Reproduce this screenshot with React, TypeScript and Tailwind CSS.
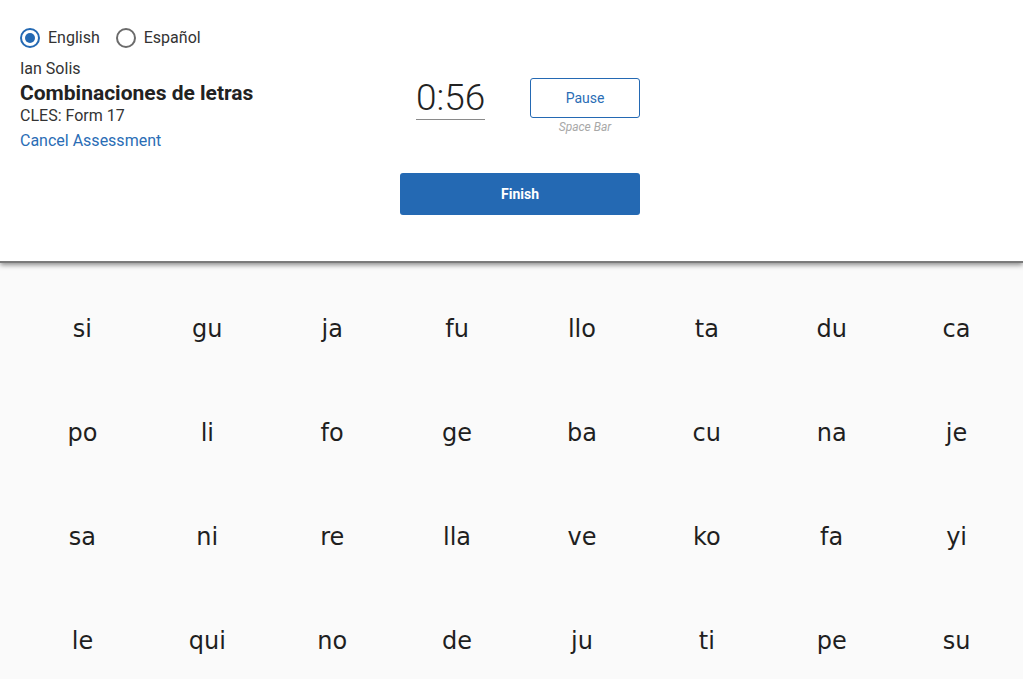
const syllables = [
  "si", "gu", "ja", "fu", "llo", "ta", "du", "ca",
  "po", "li", "fo", "ge", "ba", "cu", "na", "je",
  "sa", "ni", "re", "lla", "ve", "ko", "fa", "yi",
  "le", "qui", "no", "de", "ju", "ti", "pe", "su",
];

const Radio = ({ label, checked }: { label: string; checked: boolean }) => (
  <label className="flex items-center gap-[8px] mr-[16px]">
    <span
      className={
        checked
          ? "w-[20px] h-[20px] rounded-full border-2 border-[#2469b3] flex items-center justify-center"
          : "w-[20px] h-[20px] rounded-full border-2 border-[#6b6b6b]"
      }
    >
      {checked && <span className="w-[10px] h-[10px] rounded-full bg-[#2469b3]" />}
    </span>
    <span className="text-[16px] text-[#333]">{label}</span>
  </label>
);

const App = () => {
  return (
    <div
      className="w-[1023px] h-[679px] overflow-hidden bg-[#fafafa] flex flex-col"
      style={{ fontFamily: "Roboto, 'Liberation Sans', sans-serif" }}
    >
      <div className="relative z-10 h-[263px] shrink-0 bg-white border-b-[2px] border-[#7a7a7a] shadow-[0_2px_5px_rgba(0,0,0,0.45)] flex">
        <div className="w-[400px] pl-[20px] pt-[26px]">
          <div className="flex items-center">
            <Radio label="English" checked />
            <Radio label="Español" checked={false} />
          </div>
          <div className="mt-[9px] text-[16px] leading-[20px] text-[#333]">Ian Solis</div>
          <div className="mt-[2px] text-[21px] leading-[24px] font-bold text-[#222]">
            Combinaciones de letras
          </div>
          <div className="mt-[0px] text-[16px] leading-[22px] text-[#333]">CLES: Form 17</div>
          <div className="mt-[3px] text-[16px] leading-[22px] text-[#2a6db5]">Cancel Assessment</div>
        </div>
        <div className="w-[240px] pt-[78px] flex flex-col">
          <div className="flex">
            <div className="w-[130px] flex justify-start pl-[16px]">
              <div className="h-[42px] border-b border-[#8a8a8a] text-[37px] leading-[40px] font-light text-[#222]">
                0:56
              </div>
            </div>
            <div className="flex flex-col items-center">
              <button className="w-[110px] h-[40px] border border-[#2469b3] rounded-[3px] text-[14px] text-[#2a6db5] bg-white">
                Pause
              </button>
              <span className="mt-[1px] text-[12px] leading-[16px] italic text-[#a8a8a8]">Space Bar</span>
            </div>
          </div>
          <button className="mt-[38px] w-[240px] h-[42px] rounded-[3px] bg-[#2469b3] text-white text-[14px] font-bold">
            Finish
          </button>
        </div>
      </div>
      <div className="pl-[20px] pt-[48px] w-[1019px] grid grid-cols-8 gap-y-[68px]">
        {syllables.map((s) => (
          <div
            key={s}
            className="text-center text-[24px] leading-[36px] text-[#1f1f1f]"
            style={{ fontFamily: "'DejaVu Sans', sans-serif" }}
          >
            {s}
          </div>
        ))}
      </div>
    </div>
  );
};

export default App;
